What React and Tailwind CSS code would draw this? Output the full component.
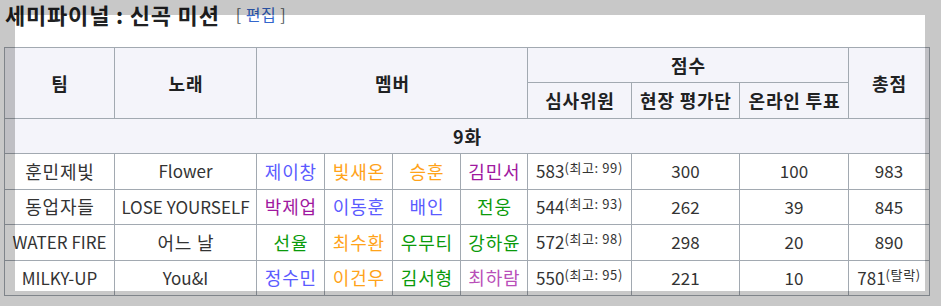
const BLUE = 'text-[#5b5bff]'
const ORANGE = 'text-[#ffa31a]'
const PURPLE = 'text-[#a0189f]'
const PINK = 'text-[#b94fb9]'
const GREEN = 'text-[#0a9a0a]'

const rows = [
  {
    team: '훈민제빛',
    song: 'Flower',
    members: [['제이창', BLUE], ['빛새온', ORANGE], ['승훈', ORANGE], ['김민서', PURPLE]],
    judge: '583',
    best: '99',
    field: '300',
    online: '100',
    total: '983',
  },
  {
    team: '동업자들',
    song: 'LOSE YOURSELF',
    members: [['박제업', PURPLE], ['이동훈', BLUE], ['배인', BLUE], ['전웅', GREEN]],
    judge: '544',
    best: '93',
    field: '262',
    online: '39',
    total: '845',
  },
  {
    team: 'WATER FIRE',
    song: '어느 날',
    members: [['선율', GREEN], ['최수환', ORANGE], ['우무티', GREEN], ['강하윤', GREEN]],
    judge: '572',
    best: '98',
    field: '298',
    online: '20',
    total: '890',
  },
  {
    team: 'MILKY-UP',
    song: 'You&I',
    members: [['정수민', BLUE], ['이건우', ORANGE], ['김서형', GREEN], ['최하람', PINK]],
    judge: '550',
    best: '95',
    field: '221',
    online: '10',
    total: '781',
    out: true,
  },
]

const th = 'border border-[#a2a9b1] bg-[#f4f4fa] font-bold text-center p-0'
const td = 'border border-[#a2a9b1] bg-white text-center p-0 whitespace-nowrap'

// hangul in the reference font runs bigger than Noto CJK, so size it up a bit
const hangul = /[\uac00-\ud7a3]/

function T({ children }) {
  const text = String(children)
  if (!hangul.test(text)) return <span>{text}</span>
  return <span className="text-[18px] tracking-[0.8px] -mr-[0.8px]">{text}</span>
}

export default function App() {
  return (
    <div
      className="relative w-[941px] h-[306px] overflow-hidden bg-white text-[#333]"
      style={{ fontFamily: '"Noto Sans CJK KR", "Noto Sans", sans-serif' }}
    >
      <div className="pl-[5px] flex items-center gap-[16px] text-[#202122] leading-[28px]">
        <h3 className="text-[22px] font-bold tracking-[0.8px]">세미파이널 : 신곡 미션</h3>
        <span className="text-[16px] text-[#54595d] tracking-[0.5px]">
          [ <span className="text-[#3366cc]">편집</span> ]
        </span>
      </div>

      <table className="mt-[19px] ml-[4px] border-collapse table-fixed w-[925px] text-[17px] leading-[20px]">
        <colgroup>
          <col className="w-[110px]" />
          <col className="w-[142px]" />
          <col className="w-[68px]" />
          <col className="w-[68px]" />
          <col className="w-[68px]" />
          <col className="w-[67px]" />
          <col className="w-[104px]" />
          <col className="w-[108px]" />
          <col className="w-[109px]" />
          <col className="w-[81px]" />
        </colgroup>
        <thead className="text-[#202122]">
          <tr className="h-[35px]">
            <th rowSpan={2} className={th}><T>팀</T></th>
            <th rowSpan={2} className={th}><T>노래</T></th>
            <th rowSpan={2} colSpan={4} className={th}><T>멤버</T></th>
            <th colSpan={3} className={th}><T>점수</T></th>
            <th rowSpan={2} className={th}><T>총점</T></th>
          </tr>
          <tr className="h-[36px]">
            <th className={th}><T>심사위원</T></th>
            <th className={th}><T>현장 평가단</T></th>
            <th className={th}><T>온라인 투표</T></th>
          </tr>
        </thead>
        <tbody>
          <tr className="h-[35px]">
            <th colSpan={10} className={th + ' text-[#202122]'}><T>9화</T></th>
          </tr>
          {rows.map((r) => (
            <tr key={r.team} className="h-[35.5px]">
              <td className={td}><T>{r.team}</T></td>
              <td className={td}><T>{r.song}</T></td>
              {r.members.map(([name, color]) => (
                <td key={name} className={td + ' ' + color}><T>{name}</T></td>
              ))}
              <td className={td}>
                <T>{r.judge}</T>
                <sup className="text-[13px] relative -top-[5px] tracking-[0.6px]">(최고: {r.best})</sup>
              </td>
              <td className={td}><T>{r.field}</T></td>
              <td className={td}><T>{r.online}</T></td>
              <td className={td}>
                <T>{r.total}</T>
                {r.out && <sup className="text-[13px] relative -top-[5px] tracking-[0.6px]">(탈락)</sup>}
              </td>
            </tr>
          ))}
        </tbody>
      </table>

      {/* dimmed overlay with a clear window */}
      <div className="absolute left-0 top-0 w-[941px] h-[15px] bg-[rgba(0,0,0,0.215)]" />
      <div className="absolute left-0 top-[291px] w-[941px] h-[15px] bg-[rgba(0,0,0,0.215)]" />
      <div className="absolute left-0 top-[15px] w-[15px] h-[276px] bg-[rgba(0,0,0,0.215)]" />
      <div className="absolute left-[925px] top-[15px] w-[16px] h-[276px] bg-[rgba(0,0,0,0.215)]" />
    </div>
  )
}
